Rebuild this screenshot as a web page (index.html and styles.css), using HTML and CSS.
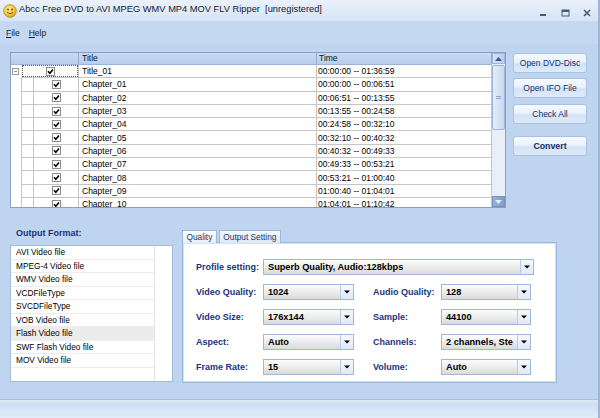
FILE: index.html
```html
<!DOCTYPE html>
<html>
<head>
<meta charset="utf-8">
<title>Abcc Free DVD to AVI MPEG WMV MP4 MOV FLV Ripper</title>
<link rel="stylesheet" href="styles.css">
</head>
<body>
<div class="window">
  <div class="titlebar">
    <span class="appicon">
      <svg width="14" height="14" viewBox="0 0 14 14">
        <defs>
          <radialGradient id="sm" cx="0.4" cy="0.35" r="0.7">
            <stop offset="0" stop-color="#ffef9a"/>
            <stop offset="0.6" stop-color="#f5c93a"/>
            <stop offset="1" stop-color="#d99a14"/>
          </radialGradient>
        </defs>
        <circle cx="7" cy="7" r="6.3" fill="url(#sm)" stroke="#b77d12" stroke-width="0.8"/>
        <ellipse cx="5" cy="5.6" rx="0.8" ry="1.1" fill="#5a3a08"/>
        <ellipse cx="9" cy="5.6" rx="0.8" ry="1.1" fill="#5a3a08"/>
        <path d="M4 8.3 Q7 11.2 10 8.3" fill="none" stroke="#6a4308" stroke-width="0.9"/>
      </svg>
    </span>
    <span class="title">Abcc Free DVD to AVI MPEG WMV MP4 MOV FLV Ripper&nbsp; [unregistered]</span>
    <div class="wctrls">
      <span class="wc"><svg width="8" height="8" viewBox="0 0 8 8"><rect x="1" y="5" width="6" height="2" fill="#4a5a70"/></svg></span>
      <span class="wc"><svg width="9" height="8" viewBox="0 0 9 8"><rect x="1" y="1" width="7" height="6" fill="none" stroke="#4a5a70" stroke-width="1"/><rect x="1" y="1" width="7" height="2" fill="#4a5a70"/></svg></span>
      <span class="wc"><svg width="8" height="8" viewBox="0 0 8 8"><path d="M1 1 L7 7 M7 1 L1 7" stroke="#4a5a70" stroke-width="1.6"/></svg></span>
    </div>
  </div>

  <div class="menubar">
    <span class="menu"><u>F</u>ile</span>
    <span class="menu"><u>H</u>elp</span>
  </div>

  <div class="top">
    <div class="grid">
      <div class="gmain">
        <div class="ghead">
          <div class="hc"></div>
          <div class="hc">Title</div>
          <div class="hc hc-time">Time</div>
        </div>
        <div class="gbody">
          <div class="row">
            <div class="tree"><span class="exp"></span></div>
            <div class="c chk span2"><span class="focus"><span class="cb"><svg width="7" height="7" viewBox="0 0 7 7"><path d="M1 3.3 L2.8 5.2 L6 1.5" fill="none" stroke="#000" stroke-width="1.6"/></svg></span></span></div>
            <div class="c txt">Title_01</div>
            <div class="c tm">00:00:00 -- 01:36:59</div>
          </div>
          <div class="row">
            <div class="tree line"></div><div class="c"></div>
            <div class="c chk"><span class="cb"><svg width="7" height="7" viewBox="0 0 7 7"><path d="M1 3.3 L2.8 5.2 L6 1.5" fill="none" stroke="#000" stroke-width="1.6"/></svg></span></div>
            <div class="c txt">Chapter_01</div>
            <div class="c tm">00:00:00 -- 00:06:51</div>
          </div>
          <div class="row">
            <div class="tree line"></div><div class="c"></div>
            <div class="c chk"><span class="cb"><svg width="7" height="7" viewBox="0 0 7 7"><path d="M1 3.3 L2.8 5.2 L6 1.5" fill="none" stroke="#000" stroke-width="1.6"/></svg></span></div>
            <div class="c txt">Chapter_02</div>
            <div class="c tm">00:06:51 -- 00:13:55</div>
          </div>
          <div class="row">
            <div class="tree line"></div><div class="c"></div>
            <div class="c chk"><span class="cb"><svg width="7" height="7" viewBox="0 0 7 7"><path d="M1 3.3 L2.8 5.2 L6 1.5" fill="none" stroke="#000" stroke-width="1.6"/></svg></span></div>
            <div class="c txt">Chapter_03</div>
            <div class="c tm">00:13:55 -- 00:24:58</div>
          </div>
          <div class="row">
            <div class="tree line"></div><div class="c"></div>
            <div class="c chk"><span class="cb"><svg width="7" height="7" viewBox="0 0 7 7"><path d="M1 3.3 L2.8 5.2 L6 1.5" fill="none" stroke="#000" stroke-width="1.6"/></svg></span></div>
            <div class="c txt">Chapter_04</div>
            <div class="c tm">00:24:58 -- 00:32:10</div>
          </div>
          <div class="row">
            <div class="tree line"></div><div class="c"></div>
            <div class="c chk"><span class="cb"><svg width="7" height="7" viewBox="0 0 7 7"><path d="M1 3.3 L2.8 5.2 L6 1.5" fill="none" stroke="#000" stroke-width="1.6"/></svg></span></div>
            <div class="c txt">Chapter_05</div>
            <div class="c tm">00:32:10 -- 00:40:32</div>
          </div>
          <div class="row">
            <div class="tree line"></div><div class="c"></div>
            <div class="c chk"><span class="cb"><svg width="7" height="7" viewBox="0 0 7 7"><path d="M1 3.3 L2.8 5.2 L6 1.5" fill="none" stroke="#000" stroke-width="1.6"/></svg></span></div>
            <div class="c txt">Chapter_06</div>
            <div class="c tm">00:40:32 -- 00:49:33</div>
          </div>
          <div class="row">
            <div class="tree line"></div><div class="c"></div>
            <div class="c chk"><span class="cb"><svg width="7" height="7" viewBox="0 0 7 7"><path d="M1 3.3 L2.8 5.2 L6 1.5" fill="none" stroke="#000" stroke-width="1.6"/></svg></span></div>
            <div class="c txt">Chapter_07</div>
            <div class="c tm">00:49:33 -- 00:53:21</div>
          </div>
          <div class="row">
            <div class="tree line"></div><div class="c"></div>
            <div class="c chk"><span class="cb"><svg width="7" height="7" viewBox="0 0 7 7"><path d="M1 3.3 L2.8 5.2 L6 1.5" fill="none" stroke="#000" stroke-width="1.6"/></svg></span></div>
            <div class="c txt">Chapter_08</div>
            <div class="c tm">00:53:21 -- 01:00:40</div>
          </div>
          <div class="row">
            <div class="tree line"></div><div class="c"></div>
            <div class="c chk"><span class="cb"><svg width="7" height="7" viewBox="0 0 7 7"><path d="M1 3.3 L2.8 5.2 L6 1.5" fill="none" stroke="#000" stroke-width="1.6"/></svg></span></div>
            <div class="c txt">Chapter_09</div>
            <div class="c tm">01:00:40 -- 01:04:01</div>
          </div>
          <div class="row">
            <div class="tree line"></div><div class="c"></div>
            <div class="c chk"><span class="cb"><svg width="7" height="7" viewBox="0 0 7 7"><path d="M1 3.3 L2.8 5.2 L6 1.5" fill="none" stroke="#000" stroke-width="1.6"/></svg></span></div>
            <div class="c txt">Chapter_10</div>
            <div class="c tm">01:04:01 -- 01:10:42</div>
          </div>
        </div>
      </div>
      <div class="vscroll">
        <div class="sbb"><svg width="7" height="4" viewBox="0 0 7 4"><path d="M0 4 L3.5 0 L7 4Z" fill="#3d5983"/></svg></div>
        <div class="thumb"><span class="grip"></span></div>
        <div class="track"></div>
        <div class="sbb down"><svg width="7" height="4" viewBox="0 0 7 4"><path d="M0 0 L3.5 4 L7 0Z" fill="#e8effa"/></svg></div>
      </div>
    </div>

    <div class="actions">
      <div class="btn">Open DVD-Disc</div>
      <div class="btn b2">Open IFO File</div>
      <div class="btn b3">Check All</div>
      <div class="btn b4 bold">Convert</div>
    </div>
  </div>

  <div class="lower">
    <div class="formats">
      <div class="fmt-label">Output Format:</div>
      <div class="fmt-list">
        <div class="fi">AVI Video file</div>
        <div class="fi">MPEG-4 Video file</div>
        <div class="fi">WMV Video file</div>
        <div class="fi">VCDFileType</div>
        <div class="fi">SVCDFileType</div>
        <div class="fi">VOB Video file</div>
        <div class="fi sel">Flash Video file</div>
        <div class="fi">SWF Flash Video file</div>
        <div class="fi">MOV Video file</div>
      </div>
    </div>

    <div class="tabs">
      <div class="tabstrip">
        <span class="tab active">Quality</span>
        <span class="tab">Output Setting</span>
      </div>
      <div class="panel">
        <div class="prow">
          <span class="lbl">Profile setting:</span>
          <div class="combo wide"><span class="cv">Superb Quality, Audio:128kbps</span><span class="dd"><svg width="6" height="4" viewBox="0 0 6 4"><path d="M0 0.5 L3 3.5 L6 0.5Z" fill="#000"/></svg></span></div>
        </div>
        <div class="prow">
          <span class="lbl">Video Quality:</span>
          <div class="combo"><span class="cv">1024</span><span class="dd"><svg width="6" height="4" viewBox="0 0 6 4"><path d="M0 0.5 L3 3.5 L6 0.5Z" fill="#000"/></svg></span></div>
          <span class="lbl r">Audio Quality:</span>
          <div class="combo rc"><span class="cv">128</span><span class="dd"><svg width="6" height="4" viewBox="0 0 6 4"><path d="M0 0.5 L3 3.5 L6 0.5Z" fill="#000"/></svg></span></div>
        </div>
        <div class="prow">
          <span class="lbl">Video Size:</span>
          <div class="combo"><span class="cv">176x144</span><span class="dd"><svg width="6" height="4" viewBox="0 0 6 4"><path d="M0 0.5 L3 3.5 L6 0.5Z" fill="#000"/></svg></span></div>
          <span class="lbl r">Sample:</span>
          <div class="combo rc"><span class="cv">44100</span><span class="dd"><svg width="6" height="4" viewBox="0 0 6 4"><path d="M0 0.5 L3 3.5 L6 0.5Z" fill="#000"/></svg></span></div>
        </div>
        <div class="prow">
          <span class="lbl">Aspect:</span>
          <div class="combo"><span class="cv">Auto</span><span class="dd"><svg width="6" height="4" viewBox="0 0 6 4"><path d="M0 0.5 L3 3.5 L6 0.5Z" fill="#000"/></svg></span></div>
          <span class="lbl r">Channels:</span>
          <div class="combo rc"><span class="cv">2 channels, Ste</span><span class="dd"><svg width="6" height="4" viewBox="0 0 6 4"><path d="M0 0.5 L3 3.5 L6 0.5Z" fill="#000"/></svg></span></div>
        </div>
        <div class="prow">
          <span class="lbl">Frame Rate:</span>
          <div class="combo"><span class="cv">15</span><span class="dd"><svg width="6" height="4" viewBox="0 0 6 4"><path d="M0 0.5 L3 3.5 L6 0.5Z" fill="#000"/></svg></span></div>
          <span class="lbl r">Volume:</span>
          <div class="combo rc"><span class="cv">Auto</span><span class="dd"><svg width="6" height="4" viewBox="0 0 6 4"><path d="M0 0.5 L3 3.5 L6 0.5Z" fill="#000"/></svg></span></div>
        </div>
      </div>
    </div>
  </div>

  <div class="statusbar"></div>
</div>
</body>
</html>
```

FILE: styles.css
```css
* { box-sizing: border-box; }
html, body { margin: 0; padding: 0; }
body {
  width: 600px;
  height: 418px;
  overflow: hidden;
  font-family: "Liberation Sans", Arial, sans-serif;
  background: #bdd3ee;
}
.window {
  width: 600px;
  height: 418px;
  display: flex;
  flex-direction: column;
  background: #bed4ef;
  border-right: 2px solid #9fb6d4;
}

/* title bar */
.titlebar {
  height: 22px;
  flex: none;
  display: flex;
  align-items: flex-start;
  padding: 3px 0 0 3px;
  background: linear-gradient(#eaf1fb, #d6e4f5);
  border-bottom: 1px solid #c9daf0;
}
.appicon { width: 14px; height: 14px; margin: 1px 2px 0 0; display: block; }
.appicon svg { display: block; }
.title { font-size: 9.3px; line-height: 12px; color: #16202e; white-space: nowrap; }
.wctrls { margin-left: auto; display: flex; height: 19px; align-items: center; }
.wc { width: 22px; display: flex; justify-content: center; }
.wc svg { display: block; }

/* menu */
.menubar {
  height: 22px;
  flex: none;
  display: flex;
  align-items: center;
  gap: 9px;
  padding-left: 6px;
  background: #c4d8f1;
}
.menu { font-size: 8.5px; color: #0f1d33; }

/* top area */
.top {
  flex: none;
  display: flex;
  padding: 8px 0 0 10px;
  gap: 7px;
}
.grid {
  width: 496px;
  height: 156px;
  border: 1px solid #889fc2;
  background: #fff;
  display: flex;
  overflow: hidden;
}
.gmain { width: 481px; display: flex; flex-direction: column; overflow: hidden; }
.ghead {
  height: 12px;
  flex: none;
  display: grid;
  grid-template-columns: 68px 238px 175px;
  background: linear-gradient(#c8dbf3, #b7ceed);
  border-bottom: 1px solid #9db4d6;
}
.hc {
  border-right: 1px solid #92acd2;
  font-size: 8.5px;
  line-height: 11px;
  padding-left: 3px;
  color: #0c1726;
}
.hc-time { padding-left: 2px; }
.gbody { overflow: hidden; }
.row {
  display: grid;
  grid-template-columns: 11px 12px 45px 238px 175px;
  height: 13.3px;
  font-size: 8.5px;
  color: #000;
}
.row .c {
  border-right: 1px solid #c6c6c6;
  border-bottom: 1px solid #c6c6c6;
  display: flex;
  align-items: center;
  min-width: 0;
  white-space: nowrap;
  overflow: hidden;
}
.tree { display: flex; align-items: center; }
.tree.line { border-right: 1px solid #c6c6c6; }
.exp {
  width: 7px; height: 7px;
  margin-left: 1px;
  border: 1px solid #9a9a9a;
  background: linear-gradient(#9a9a9a, #9a9a9a) center / 3px 1px no-repeat, #fff;
}
.span2 { grid-column: span 2; }
.chk { justify-content: center; }
.focus {
  width: 100%; height: 100%;
  outline: 1px dotted #555;
  outline-offset: -1px;
  display: flex; align-items: center; justify-content: center;
}
.cb {
  width: 9px; height: 9px;
  border: 1px solid #8d8d8d;
  background: #fff;
  display: flex; align-items: center; justify-content: center;
}
.cb svg { display: block; }
.txt { padding-left: 3px; }
.tm { padding-left: 1px; }

.vscroll {
  width: 13px;
  display: flex;
  flex-direction: column;
  background: #e8eff9;
}
.sbb {
  height: 11px;
  flex: none;
  border: 1px solid #9fb7da;
  background: linear-gradient(90deg, #d3e2f6, #b7cdec);
  display: flex; align-items: center; justify-content: center;
}
.sbb.down { background: linear-gradient(90deg, #94b0db, #7f9ed0); border-color: #7893c0; }
.sbb svg { display: block; }
.thumb {
  height: 65px;
  margin-top: 1px;
  flex: none;
  border: 1px solid #9db5d9;
  border-radius: 2px;
  background: linear-gradient(90deg, #e4edf9, #c8daf2);
  display: flex; align-items: center; justify-content: center;
}
.grip {
  width: 5px; height: 4px;
  background: repeating-linear-gradient(#8ea7cc 0 1px, transparent 1px 2px);
}
.track { flex: 1; }

.actions { display: flex; flex-direction: column; padding-top: 1px; }
.btn {
  width: 74px;
  height: 20px;
  border: 1px solid #a8c1e2;
  border-radius: 3px;
  background: linear-gradient(#f7faff 0%, #e9f1fb 45%, #d3e3f6 55%, #dfeaf8 100%);
  font-size: 8.5px;
  color: #14306a;
  display: flex; align-items: center; justify-content: center;
}
.b2 { margin-top: 5px; }
.b3 { margin-top: 6px; }
.b4 { margin-top: 12px; }
.bold { font-weight: bold; font-size: 8.8px; }

/* lower area */
.lower {
  flex: none;
  display: flex;
  gap: 9px;
  padding-left: 10px;
  margin-top: 19px;
}
.formats { width: 163px; display: flex; flex-direction: column; }
.fmt-label {
  height: 12px;
  line-height: 12px;
  padding-left: 6px;
  font-size: 9px;
  font-weight: bold;
  color: #1a337c;
}
.fmt-list {
  margin-top: 6px;
  height: 137px;
  border: 1px solid #a3badb;
  background: linear-gradient(90deg, transparent 143px, #e4e4e4 143px, #e4e4e4 144px, transparent 144px), #fff;
  overflow: hidden;
}
.fi {
  height: 13.55px;
  width: 144px;
  border-bottom: 1px solid #ececec;
  border-right: 1px solid #e4e4e4;
  font-size: 8.3px;
  line-height: 13px;
  padding-left: 5px;
  color: #000;
  white-space: nowrap;
}
.fi.sel { background: #ececec; }

.tabs { width: 375px; display: flex; flex-direction: column; padding-top: 3px; }
.tabstrip { display: flex; gap: 2px; height: 13px; position: relative; z-index: 1; }
.tab {
  height: 13px;
  padding: 0 3.5px;
  border: 1px solid #9bb7de;
  border-bottom: none;
  background: linear-gradient(#f4f8fd, #dce8f7);
  font-size: 8.3px;
  line-height: 12px;
  color: #1d3866;
}
.tab.active { background: linear-gradient(#ffffff, #e6eef9); }
.panel {
  margin-top: -1px;
  height: 141px;
  border: 1px solid #9ab7df;
  box-shadow: inset 0 0 0 1px #d3e2f5;
  background: #fff;
  padding: 16px 0 0 13px;
}
.prow { display: flex; align-items: center; height: 16px; margin-bottom: 9px; }
.lbl {
  width: 67px;
  font-size: 9px;
  font-weight: bold;
  color: #1a337c;
  white-space: nowrap;
}
.lbl.r { margin-left: 19px; width: 68px; }
.combo {
  width: 91px;
  height: 16px;
  border: 1px solid #a0b8d8;
  background: linear-gradient(#fdfdfd, #ececec 50%, #dadada);
  display: flex;
  align-items: stretch;
}
.combo.wide { width: 271px; }
.combo.rc { width: 90px; }
.cv {
  flex: 1;
  font-size: 9.2px;
  font-weight: bold;
  line-height: 14px;
  padding-left: 4px;
  color: #000;
  white-space: nowrap;
  overflow: hidden;
}
.dd {
  width: 13px;
  flex: none;
  border-left: 1px solid #b8cbe4;
  background: linear-gradient(#f6f9fe, #dfe9f7);
  display: flex; align-items: center; justify-content: center;
}
.dd svg { display: block; }

.statusbar {
  margin-top: auto;
  height: 19px;
  flex: none;
  border-top: 1px solid #a7c0e1;
  background: linear-gradient(#dce8f7, #cddef2 25%, #d8e6f6 60%, #e1ebf8);
}
```
